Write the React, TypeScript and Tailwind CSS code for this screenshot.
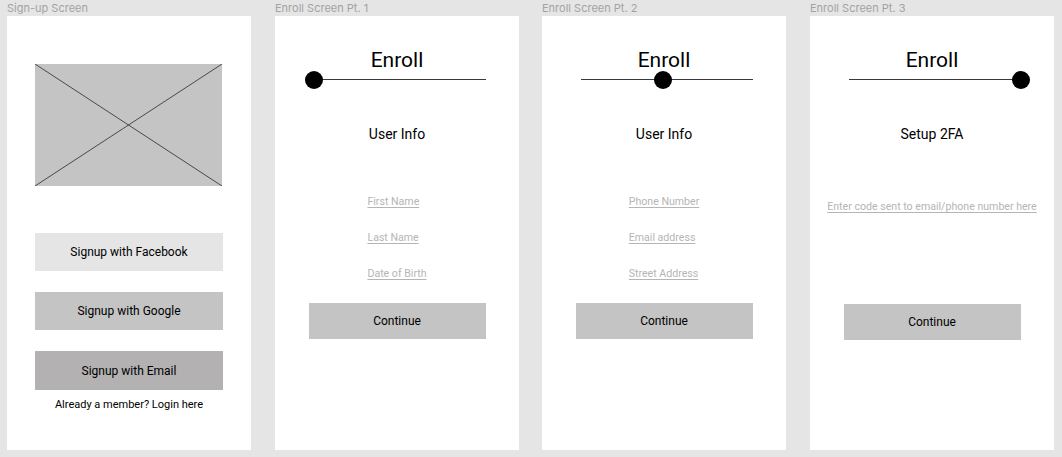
import React from "react";

const ui = { fontFamily: "Roboto, 'Liberation Sans', sans-serif" };
const label = { fontFamily: "Inter, 'Liberation Sans', sans-serif" };

function Frame({ title, gap, children }: { title: string; gap: string; children: React.ReactNode }) {
  return (
    <div className={`flex flex-col ${gap}`}>
      <div className="h-4 pt-[1px] text-[11px] leading-[14px] text-[#a3a3a3]" style={label}>
        {title}
      </div>
      <div className="relative h-[434px] w-[244px] bg-white" style={ui}>
        {children}
      </div>
    </div>
  );
}

function Progress({ step }: { step: 0 | 1 | 2 }) {
  const dot = step === 0 ? "left-[-9px]" : step === 1 ? "left-[73px]" : "left-[163px]";
  return (
    <div className="relative ml-[39px] h-[18px] w-[172px]">
      <div className="absolute left-0 right-0 top-[8px] h-px bg-[#3a3a3a]" />
      <div className={`absolute top-0 h-[18px] w-[18px] rounded-full bg-black ${dot}`} />
    </div>
  );
}

function EnrollHeader({ step, subtitle }: { step: 0 | 1 | 2; subtitle: string }) {
  return (
    <>
      <div className="pt-[32px] text-center text-[21px] leading-[24px] text-black">Enroll</div>
      <div className="mt-[-1px]">
        <Progress step={step} />
      </div>
      <div className="mt-[35px] text-center text-[14px] leading-[20px] text-black">{subtitle}</div>
    </>
  );
}

function Fields({ items }: { items: string[] }) {
  return (
    <div className="mt-[51px] flex justify-center">
      <div className="flex flex-col items-start gap-[22px]">
        {items.map((f) => (
          <span key={f} className="text-[10.6px] leading-[14px] text-[#b5b5b5] underline underline-offset-[2px]">
            {f}
          </span>
        ))}
      </div>
    </div>
  );
}

function Continue({ top }: { top: string }) {
  return (
    <div className={`${top} mx-auto flex h-[36px] w-[177px] items-center justify-center bg-[#c4c4c4] text-[12px] text-black`}>
      Continue
    </div>
  );
}

export default function App() {
  return (
    <div className="flex h-[457px] w-[1062px] bg-[#e5e5e5] pl-[7px]">
      <Frame title="Sign-up Screen" gap="">
        <div className="flex flex-col items-start pl-[28px] pt-[48px]">
          <div className="relative h-[122px] w-[187px] bg-[#c4c4c4]">
            <svg className="absolute inset-0 h-full w-full" viewBox="0 0 187 122" preserveAspectRatio="none">
              <line x1="0" y1="0" x2="187" y2="122" stroke="#3b3b3b" strokeWidth="0.9" />
              <line x1="187" y1="0" x2="0" y2="122" stroke="#3b3b3b" strokeWidth="0.9" />
            </svg>
          </div>
          <div className="mt-[47px] flex flex-col gap-[21px]">
            <div className="flex h-[38px] w-[188px] items-center justify-center bg-[#e5e5e5] text-[12px] text-black">
              Signup with Facebook
            </div>
            <div className="flex h-[38px] w-[188px] items-center justify-center bg-[#c4c4c4] text-[12px] text-black">
              Signup with Google
            </div>
            <div className="flex h-[39px] w-[188px] items-center justify-center bg-[#b3b1b1] text-[12px] text-black">
              Signup with Email
            </div>
          </div>
          <div className="mt-[8px] w-[188px] text-center text-[11px] leading-[14px] text-black">
            Already a member? Login here
          </div>
        </div>
      </Frame>

      <Frame title="Enroll Screen Pt. 1" gap="ml-6">
        <EnrollHeader step={0} subtitle="User Info" />
        <Fields items={["First Name", "Last Name", "Date of Birth"]} />
        <Continue top="mt-[22px]" />
      </Frame>

      <Frame title="Enroll Screen Pt. 2" gap="ml-[23px]">
        <EnrollHeader step={1} subtitle="User Info" />
        <Fields items={["Phone Number", "Email address", "Street Address"]} />
        <Continue top="mt-[22px]" />
      </Frame>

      <Frame title="Enroll Screen Pt. 3" gap="ml-6">
        <EnrollHeader step={2} subtitle="Setup 2FA" />
        <div className="mt-[56px] text-center text-[10.6px] leading-[14px] text-[#b5b5b5] underline underline-offset-[2px]">
          Enter code sent to email/phone number here
        </div>
        <Continue top="mt-[90px]" />
      </Frame>
    </div>
  );
}
